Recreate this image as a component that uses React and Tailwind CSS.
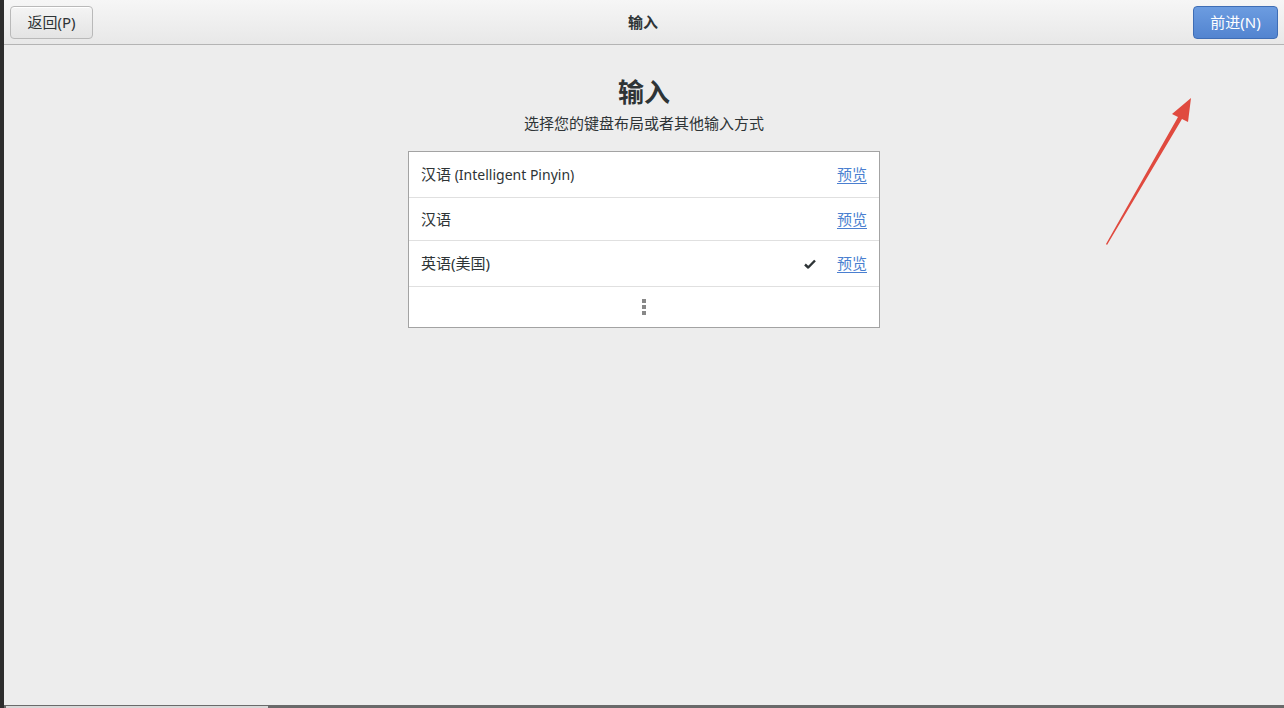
import React from "react";

// Input source selection screen (initial setup)
const font = { fontFamily: '"Noto Sans", "Noto Sans CJK SC", sans-serif' };

const sources = [
  { label: "汉语", extra: " (Intelligent Pinyin)", h: "h-[46px]" },
  { label: "汉语", h: "h-[43px]" },
  { label: "英语(美国)", h: "h-[46px]", checked: true },
];

const Check = () => (
  <svg width="12" height="10" viewBox="0 0 12 10" className="mr-[21px]">
    <path d="M1 5.5 L4.2 8.5 L11 1.5" fill="none" stroke="#2e3436" strokeWidth="2.4" strokeLinejoin="round" />
  </svg>
);

export default function App() {
  return (
    <div className="relative w-[1284px] h-[708px] flex overflow-hidden bg-[#ededed] text-[#2e3436]" style={font}>
      {/* left window edge */}
      <div className="w-[4px] h-full bg-[#2d2d2d]" />

      <div className="flex-1 flex flex-col">
        {/* header bar */}
        <header className="h-[45px] flex items-center justify-between px-[6px] bg-gradient-to-b from-[#f6f6f6] to-[#e8e8e8] border-b border-[#b4b4b4]">
          <button className="w-[83px] h-[33px] rounded-[4px] border border-[#b9b9b9] bg-gradient-to-b from-[#f4f4f4] to-[#e4e4e4] text-[15px] text-[#2e3436] shadow-[inset_0_1px_0_#fff]">
            返回(P)
          </button>
          <div className="text-[15px] font-bold text-[#2e3436]">输入</div>
          <button className="w-[85px] h-[33px] rounded-[4px] border border-[#3e6db5] bg-gradient-to-b from-[#6c9ce0] to-[#5284d0] text-[15px] text-white">
            前进(N)
          </button>
        </header>

        {/* content */}
        <main className="flex-1 flex flex-col items-center pt-[30px]">
          <h1 className="text-[26px] font-bold leading-[34px] text-[#2e3436]">输入</h1>
          <p className="mt-[4px] text-[15px] leading-[20px] text-[#2e3436]">选择您的键盘布局或者其他输入方式</p>

          <div className="mt-[18px] w-[472px] bg-white border border-[#a3a3a3]">
            {sources.map((s, i) => (
              <div key={i} className={`${s.h} flex items-center px-[12px] border-b border-[#e0e0e0] text-[15px]`}>
                <span className="flex-1">
                  {s.label}
                  {s.extra && <span className="text-[14px]">{s.extra}</span>}
                </span>
                {s.checked && <Check />}
                <a className="text-[#4a7fd0] underline underline-offset-[3px]">预览</a>
              </div>
            ))}
            <div className="h-[40px] flex items-center justify-center">
              <div className="flex flex-col gap-[2px]">
                <span className="w-[4px] h-[4px] bg-[#888]" />
                <span className="w-[4px] h-[4px] bg-[#888]" />
                <span className="w-[4px] h-[4px] bg-[#888]" />
              </div>
            </div>
          </div>
        </main>

        {/* bottom edge */}
        <div className="h-[1px] bg-[#6a6a6a]" />
        <div className="h-[2px] flex bg-[#6a6a6a]">
          <div className="ml-[2px] w-[262px] bg-[#d8d8d8]" />
        </div>
      </div>

      {/* red annotation arrow */}
      <svg className="absolute left-0 top-0 pointer-events-none" width="1284" height="708">
        <polygon points="1106,244 1178,117 1172,114 1191,98 1188,122 1182,119 1107,245" fill="#e04a3f" />
      </svg>
    </div>
  );
}
